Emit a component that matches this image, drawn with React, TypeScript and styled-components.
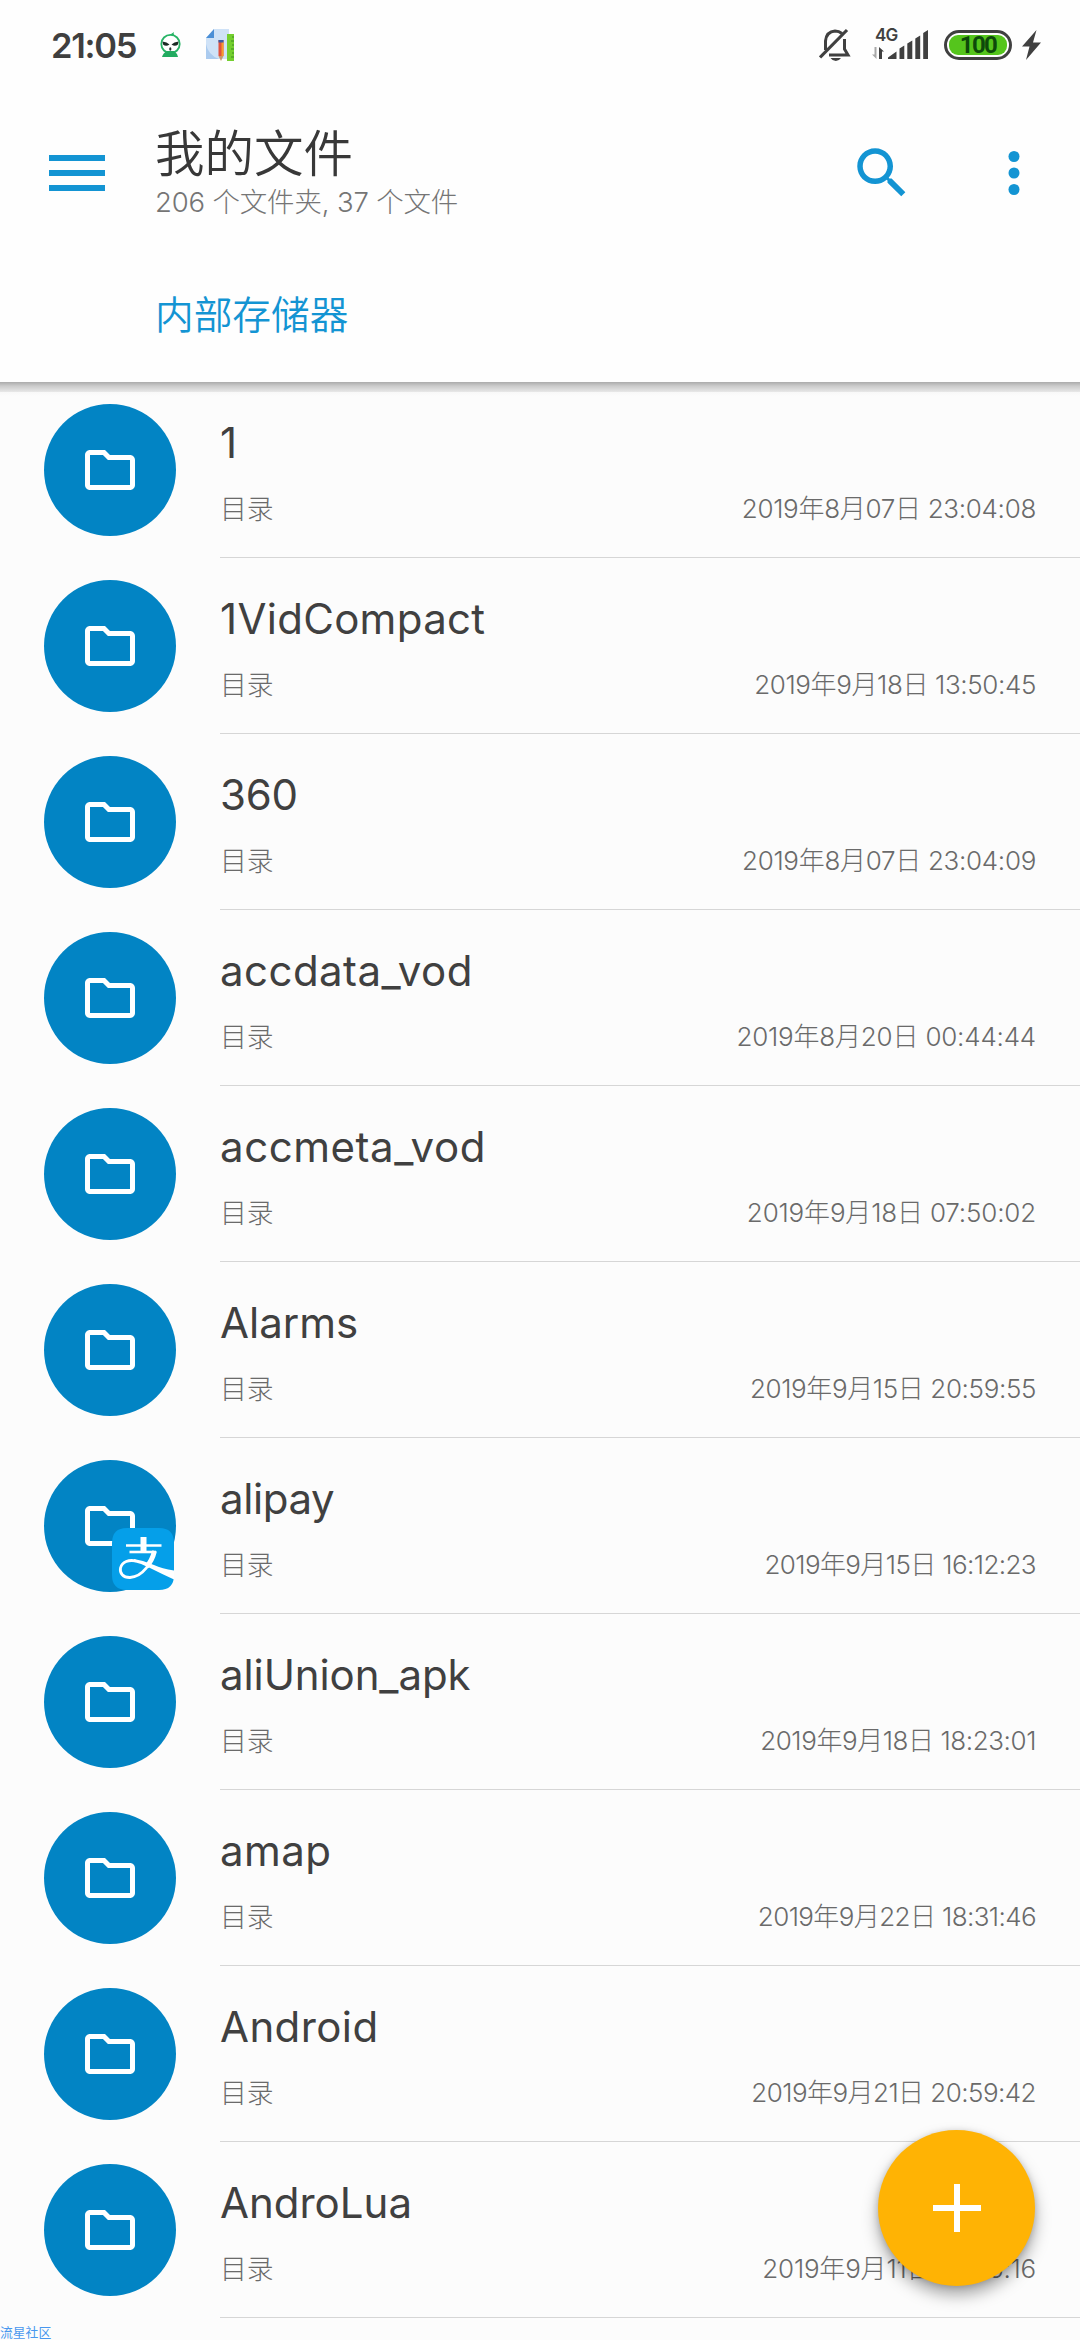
import React from "react";
import styled, { createGlobalStyle } from "styled-components";

const GlobalStyle = createGlobalStyle`
  * { box-sizing: border-box; }
  html, body { margin: 0; padding: 0; background: #fcfcfc; }
  body { font-family: Inter, "Noto Sans CJK SC", sans-serif; overflow: hidden; }
  svg { display: block; flex: none; }
`;

const blue = "#1394d3";

const Screen = styled.div`
  position: relative;
  width: 1080px;
  height: 2340px;
  overflow: hidden;
  display: flex;
  flex-direction: column;
  background: #fcfcfc;
`;

const TopPanel = styled.header`
  height: 382px;
  flex: none;
  background: #fefefe;
  display: flex;
  flex-direction: column;
`;

const HeaderShadow = styled.div`
  height: 14px;
  flex: none;
  background: linear-gradient(#ababab 0, #cbcbcb 4px, #e8e8e8 10px, #f8f8f8 10px, #fcfcfc 14px);
`;

const StatusBar = styled.div`
  height: 90px;
  padding: 0 39px 0 51px;
  display: flex;
  align-items: center;
  justify-content: space-between;
`;

const StatusGroup = styled.div`
  display: flex;
  align-items: center;
`;

const Clock = styled.span`
  width: 108px;
  font-size: 34.5px;
  line-height: 40px;
  font-weight: 600;
  letter-spacing: -1.3px;
  padding-top: 1px;
  color: #3f3f3f;
`;

const AppBar = styled.div`
  height: 166px;
  padding: 0 33px 0 49px;
  display: flex;
  align-items: center;
`;

const Titles = styled.div`
  width: 694px;
  margin-left: 50px;
  display: flex;
  flex-direction: column;
`;

const Title = styled.h1`
  margin: 0;
  font-size: 49.5px;
  line-height: 57px;
  font-weight: 350;
  color: #383838;
`;

const Subtitle = styled.div`
  font-size: 27.5px;
  line-height: 38px;
  letter-spacing: -0.17px;
  color: #757575;
  font-weight: 300;
`;

const Actions = styled.div`
  display: flex;
  gap: 66px;
`;

const Crumbs = styled.nav`
  height: 126px;
  padding: 38px 0 0 155px;
`;

const Crumb = styled.span`
  display: block;
  font-size: 38.7px;
  line-height: 42px;
  font-weight: 350;
  color: ${blue};
`;

const List = styled.main`
  display: flex;
  flex-direction: column;
  margin-top: -14px;
`;

const Row = styled.div`
  height: 176px;
  padding-left: 44px;
  display: flex;
  align-items: flex-start;
`;

const Avatar = styled.div`
  position: relative;
  width: 132px;
  height: 132px;
  margin-top: 22px;
  flex: none;
  border-radius: 50%;
  background: #0284c4;
  display: flex;
  align-items: center;
  justify-content: center;
`;

const BadgeSlot = styled.div`
  position: absolute;
  left: 68px;
  top: 68px;
`;

const RowBody = styled.div`
  flex: 1;
  height: 176px;
  margin-left: 44px;
  padding: 33px 44px 0 0;
  border-bottom: 1px solid #d6d6d6;
`;

const Name = styled.div<{ $tracking: number }>`
  font-size: 42px;
  line-height: 56px;
  font-weight: 370;
  color: #404040;
  white-space: nowrap;
  letter-spacing: ${(p) => p.$tracking}px;
`;

const Meta = styled.div`
  display: flex;
  justify-content: space-between;
  margin-top: 20px;
  font-size: 26px;
  line-height: 36px;
  color: #6a6a6a;
  font-weight: 300;
  white-space: nowrap;
`;

const Kind = styled.span`
  font-size: 26.8px;
`;

const Stamp = styled.span<{ $tracking: number }>`
  letter-spacing: ${(p) => p.$tracking}px;
`;

const Fab = styled.button`
  position: absolute;
  left: 878px;
  top: 2130px;
  width: 157px;
  height: 156px;
  padding: 0;
  border: 0;
  border-radius: 50%;
  background: #ffb304;
  box-shadow: 0 9px 16px rgba(0, 0, 0, 0.34), 0 1px 6px rgba(0, 0, 0, 0.16);
  display: flex;
  align-items: center;
  justify-content: center;
`;

const Watermark = styled.div`
  position: absolute;
  left: 0;
  bottom: -2px;
  font-size: 12.8px;
  line-height: 18px;
  color: #4897ee;
`;

const FourG = styled.span`
  font-size: 17px;
  line-height: 13px;
  font-weight: 600;
  letter-spacing: -0.8px;
  color: #404040;
  padding-left: 3px;
`;

const SignalBox = styled.div`
  width: 58px;
  height: 32px;
  margin-left: 21px;
  display: grid;
  grid-template-areas: "stack";
`;

const SignalLayer = styled.div`
  grid-area: stack;
  display: flex;
`;

const Battery = styled.div`
  width: 68px;
  height: 30px;
  margin-left: 14px;
  padding: 2px;
  border: 3px solid #404040;
  border-radius: 15px;
  display: flex;
`;

const Charge = styled.div`
  flex: 1;
  border-radius: 9px;
  background: #55c51c;
  display: flex;
  align-items: center;
  justify-content: center;
  font: 700 24px/20px Roboto, sans-serif;
  letter-spacing: -1.6px;
  color: #0d4a0a;
`;

const GourdIcon = () => (
  <svg width="24" height="26" viewBox="0 0 24 26">
    <path d="M6 4.500Q11 3.500 15 0Q13.500 3 18 4.500Z" fill="#27b466" />
    <circle cx="11.500" cy="12" r="9.200" fill="#fff" stroke="#27b466" strokeWidth="1.800" />
    <path d="M8 19H15Q18 21 19 25H3Q4 21 8 19Z" fill="#22ab60" />
    <path d="M3.500 9.500Q8 10 10.500 12.500Q7 15 4 12.500ZM19.500 9.500Q15 10 12.500 12.500Q16 15 19 12.500Z" fill="#1c2a24" />
    <ellipse cx="11.300" cy="17" rx="1.100" ry="1.700" fill="#23352c" />
  </svg>
);

const NotesIcon = () => (
  <svg width="30" height="34" viewBox="0 0 30 34">
    <path d="M9 1H24V31H1V10Z" fill="#cfe2f7" />
    <path d="M1 16Q3 27 14 31H1Z" fill="#abcbef" />
    <path d="M9 1V10H1Z" fill="#4b8fd6" />
    <path d="M22 6H29V33H22Z" fill="#74cf2f" />
    <path d="M29 9H27M29 13H26M29 17H27M29 21H26M29 25H27M29 29H26" stroke="#3c8f20" strokeWidth="1" />
    <path d="M13.500 12H18.500V28H13.500Z" fill="#e2513d" />
    <path d="M16.500 14H18.500V28H16.500Z" fill="#f79b2e" />
    <path d="M13.500 12H18.500V14.500H13.500Z" fill="#3b5ba5" />
    <path d="M13.500 28H18.500L16 33Z" fill="#c99a72" />
  </svg>
);

const MutedBellIcon = () => (
  <svg width="32" height="34" viewBox="0 0 32 34" fill="none" stroke="#404040" strokeWidth="3">
    <path d="M6.500 22V13Q7.500 3.500 16 3Q20 3 23 5.500" />
    <path d="M25.500 11V21L29 27H10" />
    <path d="M1 29.500L28 2" strokeWidth="3.200" />
    <path d="M11.500 30H22Q20 33 16.800 33Q13.500 33 11.500 30Z" fill="#404040" stroke="none" />
  </svg>
);

const SignalBars = () => (
  <svg width="58" height="32" viewBox="0 0 58 32" fill="#404040">
    <path d="M16 30V28.500L24.500 22.500V30ZM27.500 30V19.500L32.300 16.500V30ZM35.300 30V14.500L40.300 11.500V30ZM43.300 30V9.500L48.200 6.500V30ZM51.200 30V4L56 1V30Z" />
    <path d="M7 30V18L12 22.500H10V30Z" />
    <path d="M4.500 18V30L0 25.500H2.500V18Z" fill="#a8a8a8" />
  </svg>
);

const BoltIcon = () => (
  <svg width="19" height="30" viewBox="0 0 19 30">
    <path d="M14.500 0L0 16.500H7.500L4 30L19 12.500H11Z" fill="#404040" />
  </svg>
);

const MenuIcon = () => (
  <svg width="56" height="36" viewBox="0 0 56 36" fill={blue}>
    <path d="M0 0H56V6H0ZM0 15H56V21H0ZM0 30H56V36H0Z" />
  </svg>
);

const SearchIcon = () => (
  <svg width="66" height="66" viewBox="0 0 24 24" fill={blue}>
    <path d="M15.500 14h-.79l-.28-.27C15.410 12.590 16 11.110 16 9.500 16 5.910 13.090 3 9.500 3S3 5.910 3 9.500 5.910 16 9.500 16c1.610 0 3.090-.59 4.230-1.570l.27.28v.79l5 4.990L20.490 19l-4.990-5zm-6 0C7.010 14 5 11.990 5 9.500S7.010 5 9.500 5 14 7.010 14 9.500 11.990 14 9.500 14z" />
  </svg>
);

const MoreIcon = () => (
  <svg width="66" height="66" viewBox="0 0 24 24" fill={blue}>
    <circle cx="12" cy="6" r="2" />
    <circle cx="12" cy="12" r="2" />
    <circle cx="12" cy="18" r="2" />
  </svg>
);

const FolderIcon = () => (
  <svg width="60" height="60" viewBox="0 0 24 24" fill="#fff">
    <path d="M9.170 6l2 2H20v10H4V6h5.170M10 4H4c-1.100 0-1.990.9-1.990 2L2 18c0 1.100.9 2 2 2h16c1.100 0 2-.9 2-2V8c0-1.100-.9-2-2-2h-8l-2-2z" />
  </svg>
);

const AlipayIcon = () => (
  <svg width="62" height="62" viewBox="0 0 62 62">
    <path d="M15 0H47Q62 0 62 15V47Q62 62 47 62H15Q0 62 0 47V15Q0 0 15 0Z" fill="#059fe9" />
    <g fill="none" stroke="#fff">
      <path d="M31.500 9V24" strokeWidth="6" />
      <path d="M14 17.500H49.500" strokeWidth="2.600" />
      <path d="M17.500 24H44" strokeWidth="2.600" />
      <path d="M42.500 23C40 34 31 49 18 49.500C11 49.700 7.500 45 8.500 40C10 33.500 17 31.500 24 33" strokeWidth="2.800" />
      <path d="M42.500 23Q40 33 34.500 38.500" strokeWidth="5" />
    </g>
    <path d="M22 31Q32 32.500 42 37Q50 40.500 62 42.500V51.500Q50 46 38 40Q30 35.500 22 34Z" fill="#fff" />
  </svg>
);

const PlusIcon = () => (
  <svg width="48" height="48" viewBox="0 0 48 48" fill="#fff">
    <path d="M21 0H27V21H48V27H27V48H21V27H0V21H21Z" />
  </svg>
);

type Folder = { name: string; date: string; nameTracking: number; dateTracking: number; badge?: boolean };

const folders: Folder[] = [
  { name: "1", date: "2019年8月07日 23:04:08", nameTracking: 0, dateTracking: -0.3 },
  { name: "1VidCompact", date: "2019年9月18日 13:50:45", nameTracking: 0.3, dateTracking: -0.37 },
  { name: "360", date: "2019年8月07日 23:04:09", nameTracking: -0.3, dateTracking: -0.3 },
  { name: "accdata_vod", date: "2019年8月20日 00:44:44", nameTracking: 0.45, dateTracking: -0.2 },
  { name: "accmeta_vod", date: "2019年9月18日 07:50:02", nameTracking: 0.55, dateTracking: -0.17 },
  { name: "Alarms", date: "2019年9月15日 20:59:55", nameTracking: 0, dateTracking: -0.37 },
  { name: "alipay", date: "2019年9月15日 16:12:23", nameTracking: -0.4, dateTracking: -0.6, badge: true },
  { name: "aliUnion_apk", date: "2019年9月18日 18:23:01", nameTracking: -0.1, dateTracking: -0.42 },
  { name: "amap", date: "2019年9月22日 18:31:46", nameTracking: 0.4, dateTracking: -0.6 },
  { name: "Android", date: "2019年9月21日 20:59:42", nameTracking: 0.4, dateTracking: -0.55 },
  { name: "AndroLua", date: "2019年9月11日 21:05:16", nameTracking: 0, dateTracking: -0.2 },
];

const LeftIcons = styled(StatusGroup)`
  gap: 22px;
`;

const BoltSlot = styled.div`
  margin-left: 10px;
`;

export default function App() {
  return (
    <Screen>
      <GlobalStyle />
      <TopPanel>
        <StatusBar>
          <StatusGroup>
            <Clock>21:05</Clock>
            <LeftIcons>
              <GourdIcon />
              <NotesIcon />
            </LeftIcons>
          </StatusGroup>
          <StatusGroup>
            <MutedBellIcon />
            <SignalBox>
              <SignalLayer><SignalBars /></SignalLayer>
              <SignalLayer><FourG>4G</FourG></SignalLayer>
            </SignalBox>
            <Battery><Charge>100</Charge></Battery>
            <BoltSlot><BoltIcon /></BoltSlot>
          </StatusGroup>
        </StatusBar>
        <AppBar>
          <MenuIcon />
          <Titles>
            <Title>我的文件</Title>
            <Subtitle>206 个文件夹, 37 个文件</Subtitle>
          </Titles>
          <Actions>
            <SearchIcon />
            <MoreIcon />
          </Actions>
        </AppBar>
        <Crumbs><Crumb>内部存储器</Crumb></Crumbs>
      </TopPanel>
      <HeaderShadow />
      <List>
        {folders.map((f) => (
          <Row key={f.name}>
            <Avatar>
              <FolderIcon />
              {f.badge && <BadgeSlot><AlipayIcon /></BadgeSlot>}
            </Avatar>
            <RowBody>
              <Name $tracking={f.nameTracking}>{f.name}</Name>
              <Meta>
                <Kind>目录</Kind>
                <Stamp $tracking={f.dateTracking}>{f.date}</Stamp>
              </Meta>
            </RowBody>
          </Row>
        ))}
      </List>
      <Fab><PlusIcon /></Fab>
      <Watermark>流星社区</Watermark>
    </Screen>
  );
}
